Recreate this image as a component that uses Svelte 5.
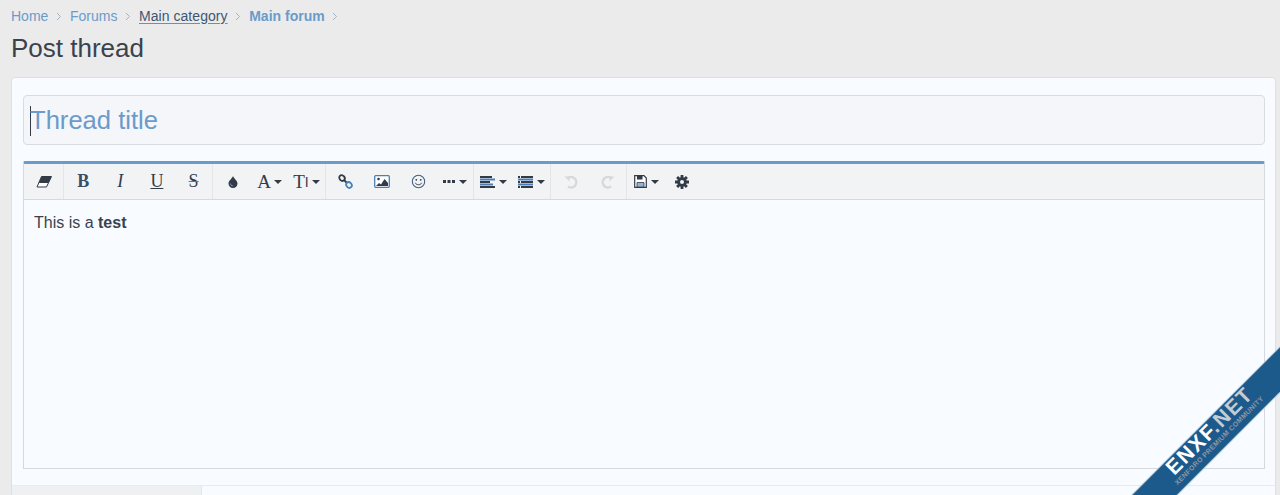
<script lang="ts">
  const crumbs = [
    { label: "Home", cls: "" },
    { label: "Forums", cls: "" },
    { label: "Main category", cls: "under" },
    { label: "Main forum", cls: "strong" }
  ];
</script>

<div class="page">
  <nav class="crumbs">
    {#each crumbs as c}
      <span class="crumb {c.cls}">{c.label}</span>
      <svg class="chev" width="6" height="9" viewBox="0 0 6 9"><path d="M1 1l3.500 3.500L1 8" fill="none" stroke="#9db4c9" stroke-width="1" /></svg>
    {/each}
  </nav>
  <h1>Post thread</h1>

  <div class="card">
    <div class="body">
      <div class="title-input"><span class="caret"></span>Thread title</div>

      <div class="editor">
        <div class="toolbar">
          <div class="group g1">
            <span class="btn wide">
              <svg width="16" height="12" viewBox="0 0 16 12"><path d="M5.500.5h10L10.500 11H1z" fill="#fff" stroke="#333b47" /><path d="M5.500.5h10L12.500 7H2.800z" fill="#333b47" /></svg>
            </span>
          </div>
          <div class="group g2">
            <span class="btn serif b">B</span>
            <span class="btn serif i">I</span>
            <span class="btn serif u">U</span>
            <span class="btn serif s">S</span>
          </div>
          <div class="group g3">
            <span class="btn">
              <svg width="10" height="12" viewBox="0 0 10 12"><path d="M5 0C5.800 2.500 9.500 4.800 9.500 7.500a4.500 4.500 0 0 1-9 0C.5 4.800 4.200 2.500 5 0z" fill="#333b47" /><path d="M2.500 7.500A2.500 2.500 0 0 0 5 10" fill="none" stroke="#6a9bca" /></svg>
            </span>
            <span class="btn serif cap">A<i class="arrow"></i></span>
            <span class="btn serif cap ti">T<small>I</small><i class="arrow"></i></span>
          </div>
          <div class="group g4">
            <span class="btn">
              <svg width="15" height="15" viewBox="0 0 15 15"><g fill="none" stroke-width="1.800"><path d="M6 6l3 3" stroke="#333b47" /><ellipse cx="4" cy="4" rx="3" ry="2.500" transform="rotate(45 4 4)" stroke="#333b47" /><ellipse cx="11" cy="11" rx="3" ry="2.500" transform="rotate(45 11 11)" stroke="#4a7fb5" /></g></svg>
            </span>
            <span class="btn">
              <svg width="16" height="13" viewBox="0 0 16 13"><rect x=".7" y=".7" width="14.600" height="11.600" rx="1" fill="#fff" stroke="#4a7fb5" stroke-width="1.300" /><circle cx="4.500" cy="4" r="1.300" fill="#333b47" /><path d="M2 11l3-3 2 1.500L10.500 4 14 8v3z" fill="#333b47" /></svg>
            </span>
            <span class="btn">
              <svg width="15" height="15" viewBox="0 0 15 15"><circle cx="7.500" cy="7.500" r="6.200" fill="none" stroke="#3f5f85" stroke-width="1.100" /><circle cx="5.300" cy="5.800" r=".9" fill="#333b47" /><circle cx="9.700" cy="5.800" r=".9" fill="#333b47" /><path d="M4.300 8.800c1 2.600 5.400 2.600 6.400 0" fill="none" stroke="#333b47" stroke-width="1" /></svg>
            </span>
            <span class="btn">
              <svg width="12" height="3" viewBox="0 0 12 3"><path d="M0 0h3v3H0zM4.500 0h3v3h-3zM9 0h3v3H9z" fill="#333b47" /></svg>
              <i class="arrow gap"></i>
            </span>
          </div>
          <div class="group g5">
            <span class="btn">
              <svg width="15" height="12" viewBox="0 0 15 12"><path d="M0 0h12v2H0zM0 5h10v2H0zM0 10h15v2H0z" fill="#333b47" /><path d="M0 2.500h15v2H0zM0 7.500h13v2H0z" fill="#4a7fb5" /></svg>
              <i class="arrow gap"></i>
            </span>
            <span class="btn">
              <svg width="15" height="12" viewBox="0 0 15 12"><path d="M0 0h2v2H0zM3 0h12v2H3zM0 5h2v2H0zM3 5h12v2H3zM0 10h2v2H0zM3 10h12v2H3z" fill="#333b47" /><path d="M0 2.500h15v2H0zM0 7.500h15v2H0z" fill="#4a7fb5" /></svg>
              <i class="arrow gap"></i>
            </span>
          </div>
          <div class="group g6">
            <span class="btn">
              <svg width="14" height="14" viewBox="0 0 14 14"><path d="M3.200 3.500A5.300 5.300 0 1 1 4 11.600" fill="none" stroke="#d6d8da" stroke-width="2.400" /><path d="M.5 1.500h5v5z" fill="#d6d8da" /></svg>
            </span>
            <span class="btn">
              <svg width="14" height="14" viewBox="0 0 14 14"><path d="M10.800 3.500A5.300 5.300 0 1 0 10 11.600" fill="none" stroke="#d6d8da" stroke-width="2.400" /><path d="M13.500 1.500h-5v5z" fill="#d6d8da" /></svg>
            </span>
          </div>
          <div class="group last">
            <span class="btn">
              <svg width="13" height="13" viewBox="0 0 13 13"><path d="M.7.700h9.300l2.300 2.300v9.300H.7z" fill="#fff" stroke="#333b47" stroke-width="1.200" /><path d="M3 1h5.500v3.500H3z" fill="#333b47" /><path d="M3 7.500h7v4.500H3z" fill="#8fb4d8" stroke="#333b47" stroke-width=".8" /></svg>
              <i class="arrow gap"></i>
            </span>
            <span class="btn">
              <svg width="14" height="14" viewBox="0 0 14 14"><g fill="#333b47"><circle cx="7" cy="7" r="4.800" /><path d="M5.600 0h2.800v3H5.600zM5.600 11h2.800v3H5.600zM0 5.600h3v2.800H0zM11 5.600h3v2.800h-3z" /><path d="M1.100 3.100l2-2 2 2-2 2zM8.900 10.900l2-2 2 2-2 2zM1.100 10.900l2-2 2 2-2 2zM8.900 3.100l2-2 2 2-2 2z" /></g><circle cx="7" cy="7" r="2" fill="#f3f4f5" /></svg>
            </span>
          </div>
        </div>
        <div class="content">This is a <b>test</b></div>
      </div>
    </div>

    <div class="foot"><div class="tab"></div></div>
  </div>

  <div class="ribbon">
    <span class="brand">ENXF<em>.NET</em></span>
    <span class="sub">XENFORO PREMIUM COMMUNITY</span>
  </div>
</div>

<style>
  :global(body) {
    margin: 0;
    background: #ebebeb;
  }

  .page {
    position: relative;
    height: 495px;
    overflow: hidden;
    padding: 0 0 0 11px;
    box-sizing: border-box;
    font-family: "Liberation Sans", Arial, sans-serif;
    color: #3a424e;
  }

  .crumbs {
    display: flex;
    align-items: center;
    height: 17px;
    padding-top: 7px;
    font-size: 14px;
    color: #6a9bca;
  }
  .chev {
    margin: 1px 7.800px 0 7.800px;
  }
  .crumb.under {
    color: #3f5670;
    letter-spacing: 0.05px;
    text-decoration: underline;
    text-decoration-color: #5d93c7;
    text-underline-offset: 2px;
  }
  .crumb.strong {
    font-weight: 700;
    color: #6a9bca;
  }

  h1 {
    margin: 9px 0 0;
    height: 30px;
    font-size: 26px;
    line-height: 30px;
    font-weight: 400;
    color: #3a424e;
  }

  .card {
    margin-top: 14px;
    width: 1265px;
    height: 430px;
    box-sizing: border-box;
    border: 1px solid #dedfe1;
    border-radius: 4px;
    background: #f8fbff;
  }
  .body {
    padding: 17px 10px 0 11px;
  }

  .title-input {
    display: flex;
    align-items: center;
    box-sizing: border-box;
    height: 50px;
    padding-left: 6px;
    padding-top: 1px;
    border: 1px solid #d8dbdf;
    border-radius: 4px;
    background: #f4f6f9;
    font-size: 25.600px;
    color: #6a9bca;
  }
  .caret {
    width: 1px;
    height: 30px;
    margin-right: -1px;
    background: #333b47;
  }

  .editor {
    box-sizing: border-box;
    height: 308px;
    margin-top: 16px;
    border: 1px solid #d5d8dc;
    border-top: 3px solid #6a9bca;
    border-radius: 2px 2px 0 0;
  }

  .toolbar {
    display: flex;
    height: 35px;
    background: #f2f3f5;
    border-bottom: 1px solid #d5d8dc;
  }
  .group {
    display: flex;
    flex: none;
    border-right: 1px solid #e4e5e7;
    box-sizing: border-box;
    padding-left: 1px;
  }
  .g1 {
    width: 40px;
    padding-left: 0;
  }
  .g2 {
    width: 149px;
  }
  .g3 {
    width: 113px;
  }
  .g4 {
    width: 148px;
  }
  .g5 {
    width: 77px;
  }
  .g6 {
    width: 76px;
  }
  .group.last {
    width: auto;
    border-right: 0;
  }
  .btn {
    display: flex;
    flex: 1;
    align-items: center;
    justify-content: center;
    min-width: 36px;
    color: #333b47;
  }
  .serif {
    font-family: "Liberation Serif", "Times New Roman", serif;
    font-size: 18px;
  }
  .b {
    font-weight: 700;
    color: #3b4e66;
  }
  .i {
    font-style: italic;
  }
  .u {
    text-decoration: underline;
  }
  .s {
    text-decoration: line-through;
    text-decoration-color: #4a7fb5;
  }
  .cap {
    font-size: 19px;
  }
  .ti small {
    font-size: 14px;
    font-family: "Liberation Sans", sans-serif;
    font-weight: 400;
    margin-top: 1px;
  }
  .arrow {
    width: 0;
    height: 0;
    margin-left: 3px;
    border: 4px solid transparent;
    border-top: 4px solid #333b47;
    border-bottom: 0;
  }
  .arrow.gap {
    margin-left: 4px;
  }

  .content {
    padding: 13px 10px;
    font-size: 16px;
    line-height: 20px;
    color: #3a424e;
  }
  .content b {
    font-weight: 700;
  }

  .foot {
    margin-top: 16px;
    height: 10px;
    border-top: 1px solid #e9eaec;
  }
  .tab {
    width: 189px;
    height: 10px;
    background: #eff0f2;
    border-right: 1px solid #e4e5e7;
  }

  .ribbon {
    position: absolute;
    left: 1094px;
    top: 420px;
    width: 240px;
    height: 31px;
    transform: rotate(-45deg);
    display: flex;
    flex-direction: column;
    align-items: center;
    background: #1c5a8c;
    box-shadow: 0 0 0 1px #a9c0d4;
    color: #fff;
  }
  .brand {
    font-size: 21px;
    font-weight: 700;
    line-height: 18px;
    letter-spacing: 1.500px;
    white-space: nowrap;
  }
  .brand em {
    font-style: normal;
    color: #c4ccd4;
  }
  .sub {
    font-size: 7px;
    font-weight: 700;
    line-height: 9px;
    letter-spacing: 0.3px;
    color: #8a97a3;
    white-space: nowrap;
  }
</style>
